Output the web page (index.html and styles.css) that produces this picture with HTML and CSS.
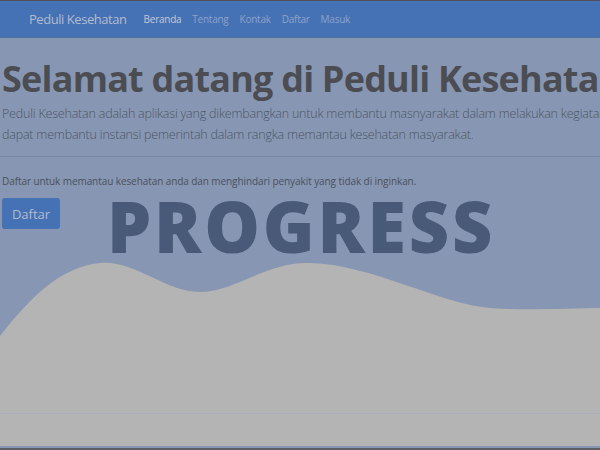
FILE: index.html
```html
<!DOCTYPE html>
<html lang="id">
<head>
<meta charset="utf-8">
<title>Peduli Kesehatan</title>
<link rel="stylesheet" href="styles.css">
</head>
<body>
<div class="frame">
  <nav class="navbar">
    <span class="brand">Peduli Kesehatan</span>
    <ul class="nav">
      <li class="active">Beranda</li>
      <li>Tentang</li>
      <li>Kontak</li>
      <li>Daftar</li>
      <li>Masuk</li>
    </ul>
  </nav>
  <main class="hero">
    <h1 class="title">Selamat datang di Peduli Kesehatan</h1>
    <p class="lead">Peduli Kesehatan adalah aplikasi yang dikembangkan untuk membantu masnyarakat dalam melakukan kegiatan pemantauan kesehatan,<br>dapat membantu instansi pemerintah dalam rangka memantau kesehatan masyarakat.</p>
    <hr class="divider">
    <p class="note">Daftar untuk memantau kesehatan anda dan menghindari penyakit yang tidak di inginkan.</p>
    <button class="btn">Daftar</button>
  </main>
  <section class="wave">
    <svg viewBox="0 0 600 184" preserveAspectRatio="none" width="600" height="184">
      <path d="M0 74 C30 36 60 5 100 1 C135 -2 165 30 200 30 C235 30 265 0 310 1 C370 2 440 42 490 46 C530 49 570 46 600 46 L600 184 L0 184 Z" fill="#b4b4b4"/>
      <line x1="0" y1="151.5" x2="600" y2="151.5" stroke="#a9aebd" stroke-width="1"/>
    </svg>
  </section>
  <div class="watermark">PROGRESS</div>
</div>
</body>
</html>
```

FILE: styles.css
```css
html, body {
  margin: 0;
  padding: 0;
}
body {
  width: 600px;
  height: 450px;
  overflow: hidden;
  background: #8797b3;
  font-family: "Open Sans", "Noto Sans", sans-serif;
}
.frame {
  position: relative;
  width: 600px;
  height: 450px;
  box-sizing: border-box;
  border-top: 1px solid #4d4f55;
  border-bottom: 2px solid #5b5e63;
  overflow: hidden;
  display: flex;
  flex-direction: column;
}
.navbar {
  height: 36px;
  flex: none;
  background: #4571b5;
  display: flex;
  align-items: center;
  padding-left: 29px;
  border-bottom: 1px solid #50709f;
}
.brand {
  font-size: 13px;
  color: #b3bccd;
  margin-right: 17px;
  letter-spacing: -0.45px;
}
.nav {
  list-style: none;
  margin: 0;
  padding: 0;
  display: flex;
  gap: 11px;
  font-size: 10px;
  letter-spacing: -0.25px;
  color: #8ea3c8;
}
.nav .active {
  color: #c4cad6;
}
.hero {
  flex: none;
  padding: 0 0 0 2px;
  width: 900px;
}
.title {
  margin: 19px 0 0 0;
  font-size: 36px;
  line-height: 44px;
  font-weight: 700;
  color: #4b4d53;
  letter-spacing: -0.8px;
  white-space: nowrap;
}
.lead {
  margin: 2px 0 0 0;
  font-size: 12.5px;
  line-height: 21px;
  font-weight: 300;
  color: #4d5463;
  letter-spacing: -0.2px;
  white-space: nowrap;
}
.divider {
  margin: 11px 0 0 -2px;
  width: 600px;
  border: 0;
  border-top: 1px solid #7a8aa6;
  height: 0;
}
.note {
  margin: 17px 0 0 0;
  font-size: 10px;
  line-height: 14px;
  letter-spacing: -0.08px;
  color: #4a505c;
}
.btn {
  margin-top: 10px;
  display: block;
  width: 58px;
  height: 31px;
  border: 0;
  border-radius: 3px;
  background: #4571b5;
  color: #b3bccd;
  font-family: inherit;
  font-size: 13px;
  padding: 0;
}
.wave {
  flex: none;
  margin-top: 33px;
  height: 184px;
}
.wave svg {
  display: block;
}
.watermark {
  position: absolute;
  left: 107px;
  top: 196px;
  font-size: 70px;
  line-height: 58px;
  font-weight: 800;
  color: #495a79;
  letter-spacing: 2.8px;
}
```
